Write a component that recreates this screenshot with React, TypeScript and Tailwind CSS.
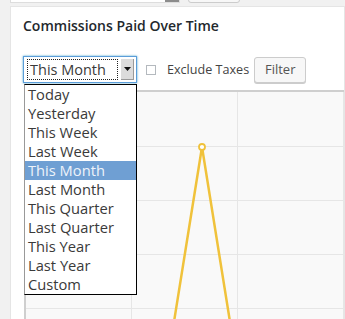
import React from "react";

const items = [
  "Today",
  "Yesterday",
  "This Week",
  "Last Week",
  "This Month",
  "Last Month",
  "This Quarter",
  "Last Quarter",
  "This Year",
  "Last Year",
  "Custom",
];

export default function App() {
  return (
    <div
      className="relative w-[345px] h-[319px] overflow-hidden bg-[#f1f1f1]"
      style={{ fontFamily: '"Open Sans", "DejaVu Sans", sans-serif' }}
    >
      {/* top strip */}
      <div className="h-[3px] flex items-end pl-[10px]">
        <div className="flex h-[28px] w-[170px] border border-[#ddd] bg-white">
          <div className="flex-1" />
          <div className="w-[14px] bg-[#8c8c8c]" />
        </div>
        <div className="ml-[8px] h-[28px] w-[52px] rounded-[3px] border border-[#ccc] bg-[#f7f7f7]" />
      </div>

      {/* panel */}
      <div className="ml-[10px] mt-[3px] h-[400px] border border-[#e5e5e5] bg-white pl-[12px]">
        <div className="pt-[9px] text-[14px] font-semibold leading-[19px] text-[#23282d]">
          Commissions Paid Over Time
        </div>

        {/* controls */}
        <div className="mt-[21px] flex items-center">
          <div className="flex h-[27px] w-[114px] items-stretch border border-[#5b9dd9] bg-white p-[2px] shadow-[0_0_2px_rgba(30,140,190,0.8)]">
            <div className="ml-[1px] flex flex-1 items-center border border-dotted border-[#222] pl-[2px] text-[14.5px] leading-[19px] text-[#3a3a3a]">
              This Month
            </div>
            <div className="ml-[3px] flex w-[13px] items-center justify-center bg-[#dcdcdc] border-r border-b border-[#9a9a9a]">
              <svg width="7" height="4" viewBox="0 0 7 4">
                <polygon points="0,0 7,0 3.5,4" fill="#111" />
              </svg>
            </div>
          </div>
          <div className="ml-[9px] h-[10px] w-[10px] border border-[#b4b9be] bg-white" />
          <div className="ml-[11px] text-[12.6px] leading-[19px] text-[#444]">Exclude Taxes</div>
          <div className="ml-[5px] flex h-[26px] w-[52px] items-center justify-center rounded-[3px] border border-[#ccc] bg-[#f7f7f7] text-[13px] text-[#555] shadow-[0_1px_0_#ccc]">
            Filter
          </div>
        </div>

        {/* chart */}
        <div className="relative ml-[1px] mt-[7px] h-[240px] border-l-2 border-t-2 border-[#cfcfcf] bg-[#f9f9f9]">
          <svg className="absolute left-0 top-0" width="330" height="240">
            <g stroke="#e6e6e6" strokeWidth="1">
              <line x1="105.5" y1="0" x2="105.5" y2="240" />
              <line x1="211.5" y1="0" x2="211.5" y2="240" />
              <line x1="317.5" y1="0" x2="317.5" y2="240" />
              <line x1="0" y1="54.5" x2="330" y2="54.5" />
              <line x1="0" y1="108.5" x2="330" y2="108.5" />
              <line x1="0" y1="162.5" x2="330" y2="162.5" />
              <line x1="0" y1="216.5" x2="330" y2="216.5" />
            </g>
            <polyline
              points="147,236 176,55 205,236"
              fill="none"
              stroke="#f0c23b"
              strokeWidth="2.5"
              strokeLinejoin="round"
            />
            <circle cx="176" cy="55" r="3" fill="#fff" stroke="#f0c23b" strokeWidth="1.8" />
          </svg>
        </div>
      </div>

      {/* open dropdown list */}
      <div className="absolute left-[24px] top-[84px] w-[113px] border border-black border-l-[#999] bg-white">
        {items.map((it) => (
          <div
            key={it}
            className={
              it === "This Month"
                ? "h-[19px] pl-[3px] text-[14.7px] leading-[19px] bg-[#6f9fd3] text-[#eef3fa]"
                : "h-[19px] pl-[3px] text-[14.7px] leading-[19px] text-[#3a3a3a]"
            }
          >
            {it}
          </div>
        ))}
      </div>
    </div>
  );
}
